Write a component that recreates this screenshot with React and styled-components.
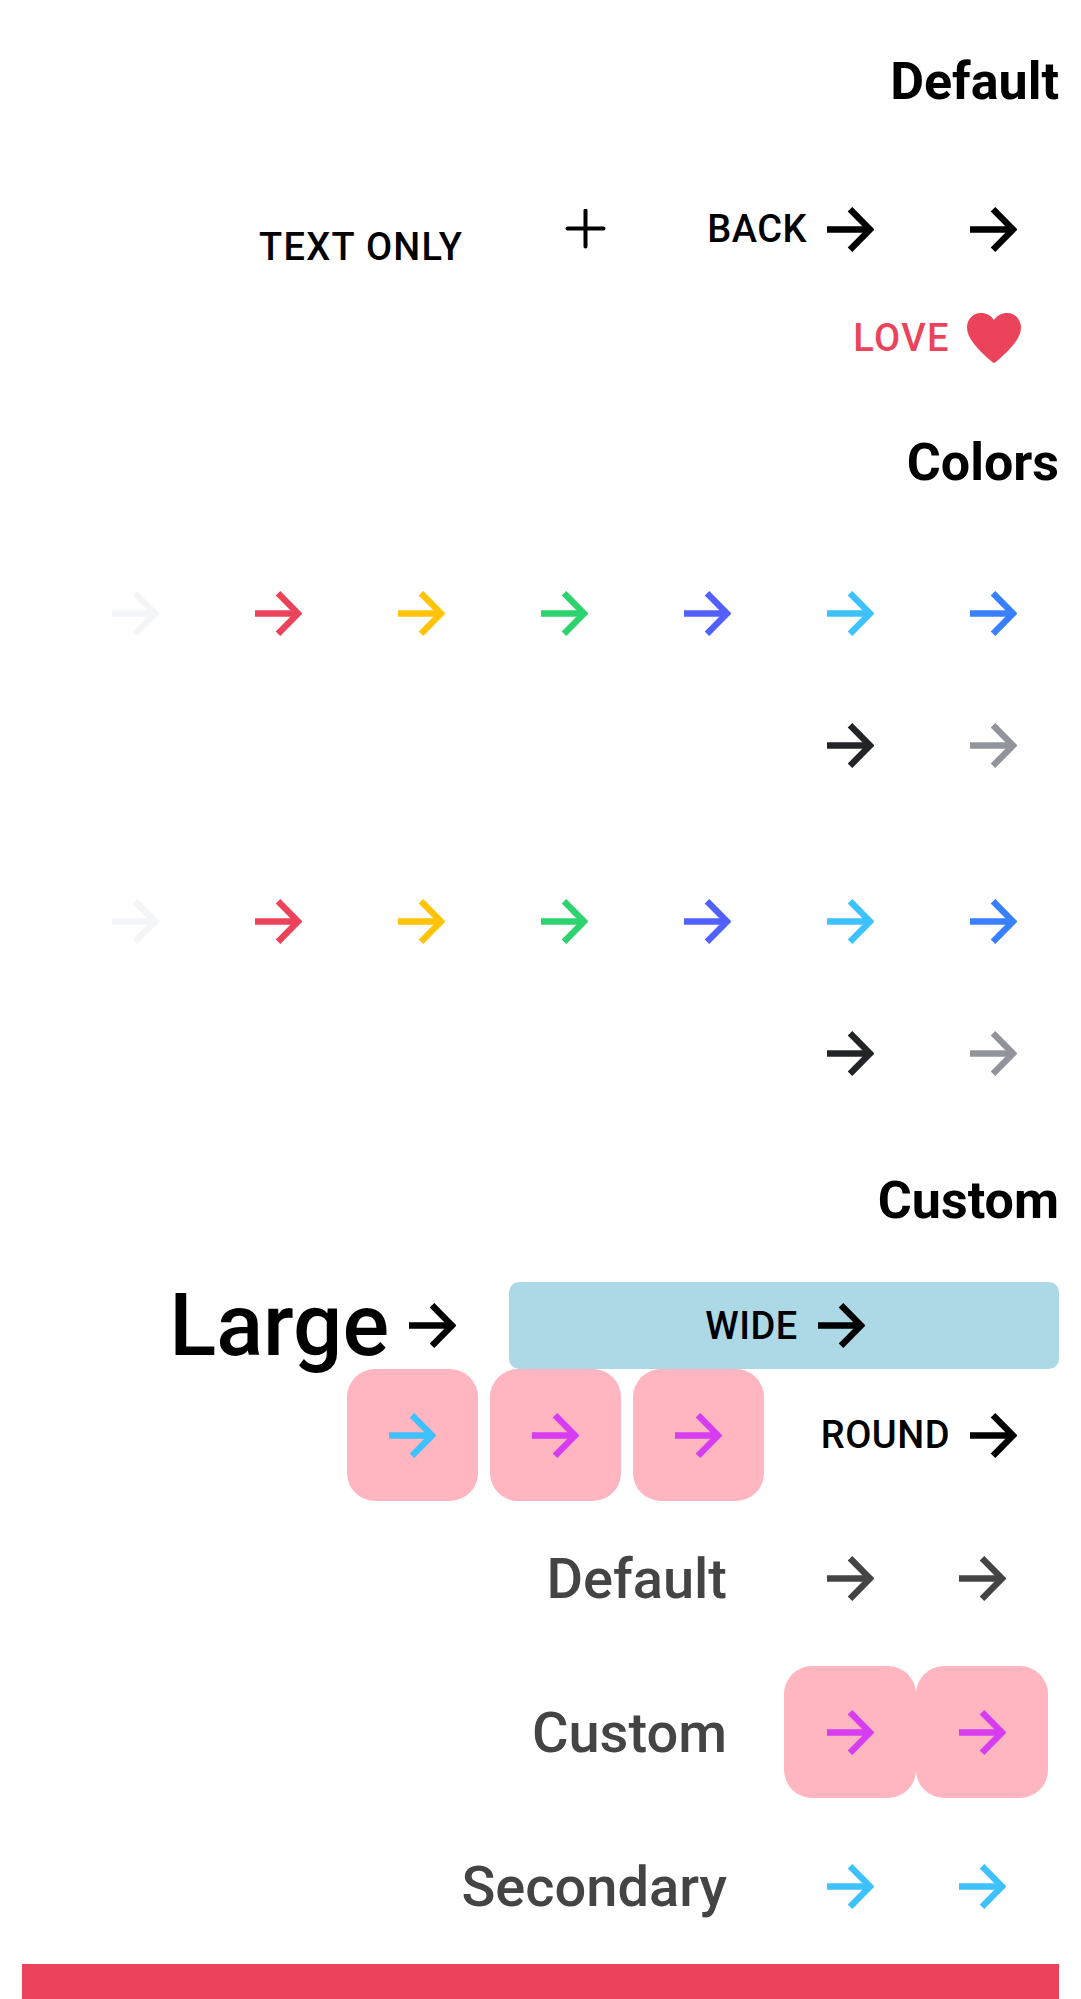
import React from 'react';
import styled, { createGlobalStyle } from 'styled-components';

const Global = createGlobalStyle`
  html, body { margin: 0; padding: 0; background: #fff; }
  body { font-family: Roboto, "Liberation Sans", sans-serif; width: 1081px; height: 1999px; overflow: hidden; }
`;

const Page = styled.div`
  box-sizing: border-box;
  width: 1081px;
  height: 1999px;
  padding: 54px 22px 0;
  display: flex;
  flex-direction: column;
`;

const Title = styled.h2`
  margin: ${p => p.$top || 0}px 0 ${p => p.$bottom || 0}px;
  height: 56px;
  font-size: 52px;
  line-height: 56px;
  font-weight: 700;
  color: #000;
  text-align: right;
`;

const Row = styled.div`
  display: flex;
  justify-content: flex-end;
  align-items: center;
  height: ${p => p.$h}px;
  margin-top: ${p => p.$top || 0}px;
  margin-right: ${p => p.$mr ?? -6}px;
`;

const Button = styled.div`
  box-sizing: border-box;
  flex: none;
  display: flex;
  align-items: center;
  justify-content: center;
  gap: 20px;
  height: 132px;
  margin: 0 6px;
  padding: 0 42px 0 ${p => p.$pl ?? 42}px;
  font-size: 38px;
  font-weight: 500;
  letter-spacing: ${p => p.$ls ?? 0.5}px;
  color: ${p => p.$color || '#000'};
  background: ${p => p.$bg || 'transparent'};
  border-radius: ${p => (p.$bg ? '28px' : '0')};
`;

const TextOnlyLabel = styled.span`
  position: relative;
  top: 18px;
  margin-right: 5px;
`;

const LargeButton = styled(Button)`
  height: 87px;
  margin: 0 11px 0 0;
  padding: 0 42px 0 0;
  font-size: 87px;
  letter-spacing: 0;
  line-height: 87px;
`;

const WideButton = styled(Button)`
  width: 550px;
  height: 87px;
  margin: 0;
  padding-left: 44px;
  background: #add8e6;
  border-radius: 10px;
`;

const LabelRow = styled.div`
  display: flex;
  justify-content: flex-end;
  align-items: center;
  height: 154px;
  padding-right: 11px;
`;

const RowLabel = styled.span`
  margin-right: 57px;
  padding-top: 2px;
  font-size: 56px;
  font-weight: 500;
  color: #444;
`;

const SlotButton = styled(Button)`
  width: 132px;
  margin: 0;
  padding: 0;
`;

const HeartWrap = styled.span`
  display: flex;
  margin: 0 -3.5px;
`;

const RedBar = styled.div`
  height: 35px;
  margin-top: 1px;
  background: #eb445a;
`;

const RowGap = styled.div`
  height: 44px;
`;

const IconSvg = styled.svg`
  flex: none;
  display: block;
`;

const Arrow = () => (
  <IconSvg width="47" height="45" viewBox="0 0 47 45" fill="none" stroke="currentColor" strokeWidth="6.4">
    <path d="M0 22.5H43" />
    <path d="M23 2.2L43 22.5L23 42.8" />
  </IconSvg>
);

const Plus = () => (
  <IconSvg width="47" height="41" viewBox="0 0 47 41" fill="none" stroke="currentColor" strokeWidth="4" strokeLinecap="round">
    <path d="M21.5 1.5V37.5M3.5 19.5H39.5" />
  </IconSvg>
);

const Heart = () => (
  <IconSvg width="54" height="50" viewBox="0 0 54 50" fill="#eb445a">
    <path d="M27 7C24 2.5 19 0 14 0C6 0 0 6.3 0 14.5C0 25 10 36 25.5 49.3Q27 50.4 28.5 49.3C44 36 54 25 54 14.5C54 6.3 48 0 40 0C35 0 30 2.5 27 7Z" />
  </IconSvg>
);

const colors = ['#f4f5f8', '#eb445a', '#ffc409', '#2dd36f', '#5260ff', '#3dc2ff', '#3880ff'];
const secondLine = ['#222428', '#92949c'];

const ColorRows = () => (
  <>
    <Row $h={132}>{colors.map(c => <Button key={c} $color={c}><Arrow /></Button>)}</Row>
    <Row $h={132}>{secondLine.map(c => <Button key={c} $color={c}><Arrow /></Button>)}</Row>
  </>
);

const PINK = '#ffb6c1';
const MAGENTA = '#d63df0';

export default function App() {
  return (
    <Page>
      <Global />
      <Title>Default</Title>
      <Row $h={132} $top={53}>
        <Button $ls={1.3}><TextOnlyLabel>TEXT ONLY</TextOnlyLabel></Button>
        <Button><Plus /></Button>
        <Button>BACK<Arrow /></Button>
        <Button><Arrow /></Button>
      </Row>
      <Row $h={86}>
        <Button $color="#eb445a" $ls={1.4}>LOVE<HeartWrap><Heart /></HeartWrap></Button>
      </Row>
      <Title $top={54} $bottom={56}>Colors</Title>
      <ColorRows />
      <RowGap />
      <ColorRows />
      <Title $top={54} $bottom={53}>Custom</Title>
      <Row $h={87} $mr={0}>
        <LargeButton>Large<Arrow /></LargeButton>
        <WideButton>WIDE<Arrow /></WideButton>
      </Row>
      <Row $h={132}>
        <Button $bg={PINK} $color="#3dc2ff"><Arrow /></Button>
        <Button $bg={PINK} $color={MAGENTA}><Arrow /></Button>
        <Button $bg={PINK} $color={MAGENTA}><Arrow /></Button>
        <Button $pl={45}>ROUND<Arrow /></Button>
      </Row>
      <LabelRow>
        <RowLabel>Default</RowLabel>
        <SlotButton $color="#444"><Arrow /></SlotButton>
        <SlotButton $color="#444"><Arrow /></SlotButton>
      </LabelRow>
      <LabelRow>
        <RowLabel>Custom</RowLabel>
        <SlotButton $bg={PINK} $color={MAGENTA}><Arrow /></SlotButton>
        <SlotButton $bg={PINK} $color={MAGENTA}><Arrow /></SlotButton>
      </LabelRow>
      <LabelRow>
        <RowLabel>Secondary</RowLabel>
        <SlotButton $color="#3dc2ff"><Arrow /></SlotButton>
        <SlotButton $color="#3dc2ff"><Arrow /></SlotButton>
      </LabelRow>
      <RedBar />
    </Page>
  );
}
